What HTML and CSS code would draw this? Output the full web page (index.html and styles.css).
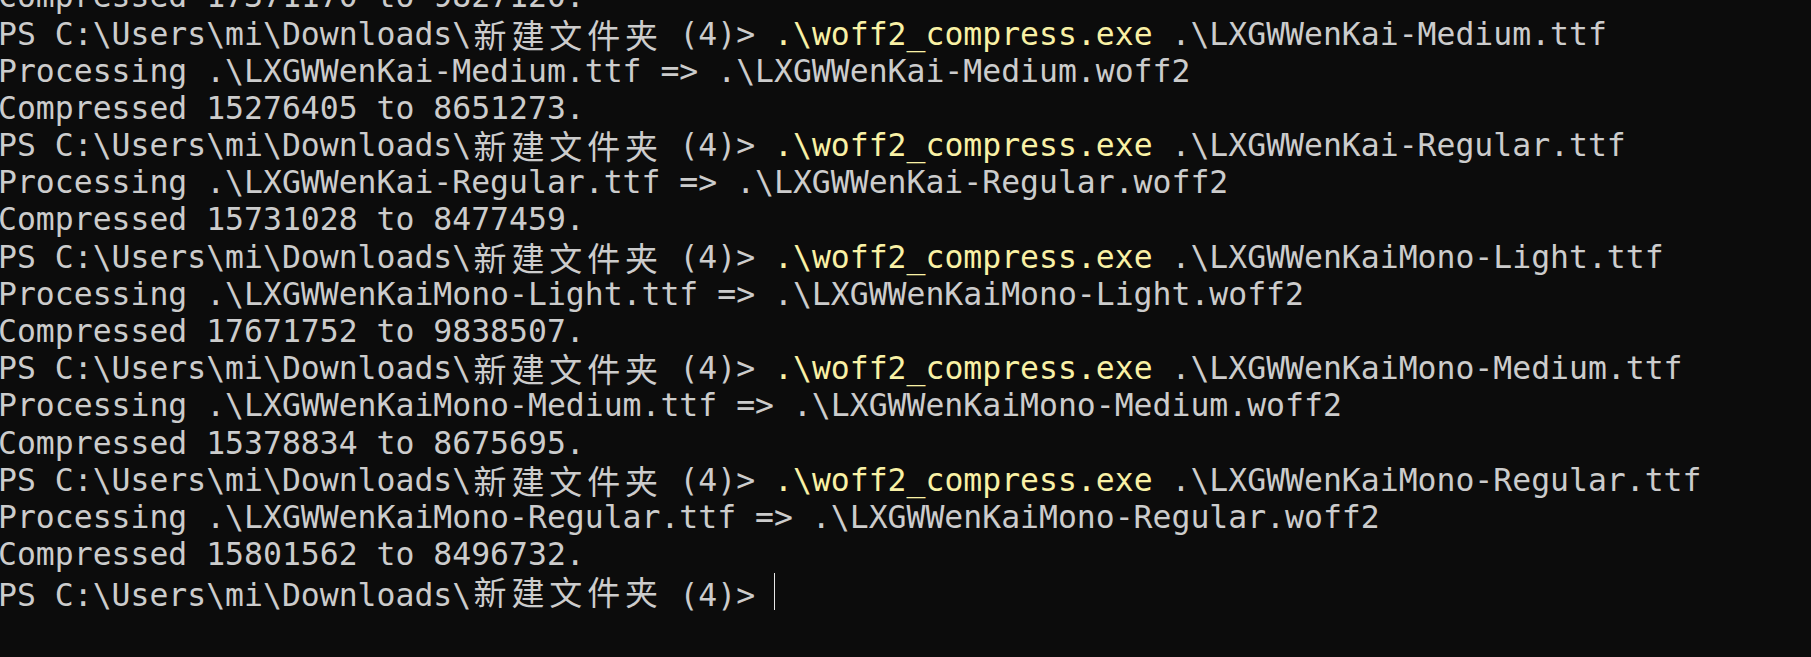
FILE: index.html
```html
<!DOCTYPE html>
<html lang="zh">
<head>
<meta charset="utf-8">
<title>Terminal</title>
<link rel="stylesheet" href="styles.css">
</head>
<body>
<div class="term">
<div class="line">Compressed 17371170 to 9827120.</div>
<div class="line">PS C:\Users\mi\Downloads\<span class="cjk">新</span><span class="cjk">建</span><span class="cjk">文</span><span class="cjk">件</span><span class="cjk">夹</span> (4)&gt; <span class="cmd">.\woff2_compress.exe</span> .\LXGWWenKai-Medium.ttf</div>
<div class="line">Processing .\LXGWWenKai-Medium.ttf =&gt; .\LXGWWenKai-Medium.woff2</div>
<div class="line">Compressed 15276405 to 8651273.</div>
<div class="line">PS C:\Users\mi\Downloads\<span class="cjk">新</span><span class="cjk">建</span><span class="cjk">文</span><span class="cjk">件</span><span class="cjk">夹</span> (4)&gt; <span class="cmd">.\woff2_compress.exe</span> .\LXGWWenKai-Regular.ttf</div>
<div class="line">Processing .\LXGWWenKai-Regular.ttf =&gt; .\LXGWWenKai-Regular.woff2</div>
<div class="line">Compressed 15731028 to 8477459.</div>
<div class="line">PS C:\Users\mi\Downloads\<span class="cjk">新</span><span class="cjk">建</span><span class="cjk">文</span><span class="cjk">件</span><span class="cjk">夹</span> (4)&gt; <span class="cmd">.\woff2_compress.exe</span> .\LXGWWenKaiMono-Light.ttf</div>
<div class="line">Processing .\LXGWWenKaiMono-Light.ttf =&gt; .\LXGWWenKaiMono-Light.woff2</div>
<div class="line">Compressed 17671752 to 9838507.</div>
<div class="line">PS C:\Users\mi\Downloads\<span class="cjk">新</span><span class="cjk">建</span><span class="cjk">文</span><span class="cjk">件</span><span class="cjk">夹</span> (4)&gt; <span class="cmd">.\woff2_compress.exe</span> .\LXGWWenKaiMono-Medium.ttf</div>
<div class="line">Processing .\LXGWWenKaiMono-Medium.ttf =&gt; .\LXGWWenKaiMono-Medium.woff2</div>
<div class="line">Compressed 15378834 to 8675695.</div>
<div class="line">PS C:\Users\mi\Downloads\<span class="cjk">新</span><span class="cjk">建</span><span class="cjk">文</span><span class="cjk">件</span><span class="cjk">夹</span> (4)&gt; <span class="cmd">.\woff2_compress.exe</span> .\LXGWWenKaiMono-Regular.ttf</div>
<div class="line">Processing .\LXGWWenKaiMono-Regular.ttf =&gt; .\LXGWWenKaiMono-Regular.woff2</div>
<div class="line">Compressed 15801562 to 8496732.</div>
<div class="line">PS C:\Users\mi\Downloads\<span class="cjk">新</span><span class="cjk">建</span><span class="cjk">文</span><span class="cjk">件</span><span class="cjk">夹</span> (4)&gt; <span class="cursor"></span></div>
</div>
</body>
</html>
```

FILE: styles.css
```css
html, body {
  margin: 0;
  padding: 0;
  background: #0c0c0c;
  overflow: hidden;
  height: 100%;
}

.term {
  margin: -21.7px 0 0 -2px;
  font-family: "DejaVu Sans Mono", "Liberation Mono", "Noto Sans CJK SC", monospace;
  font-size: 31.44px;
  line-height: 37.2px;
  color: #cccccc;
}

.line {
  height: 37.2px;
  white-space: pre;
}

.cjk {
  display: inline-block;
  width: 37.86px;
  text-align: center;
  font-family: "Noto Sans CJK SC", sans-serif;
  font-size: 33px;
  line-height: 37.2px;
  vertical-align: top;
}

.cmd {
  color: #f9f1a5;
}

.cursor {
  display: inline-block;
  width: 1px;
  height: 37px;
  background: #e8e8e8;
  vertical-align: -4px;
}
```
